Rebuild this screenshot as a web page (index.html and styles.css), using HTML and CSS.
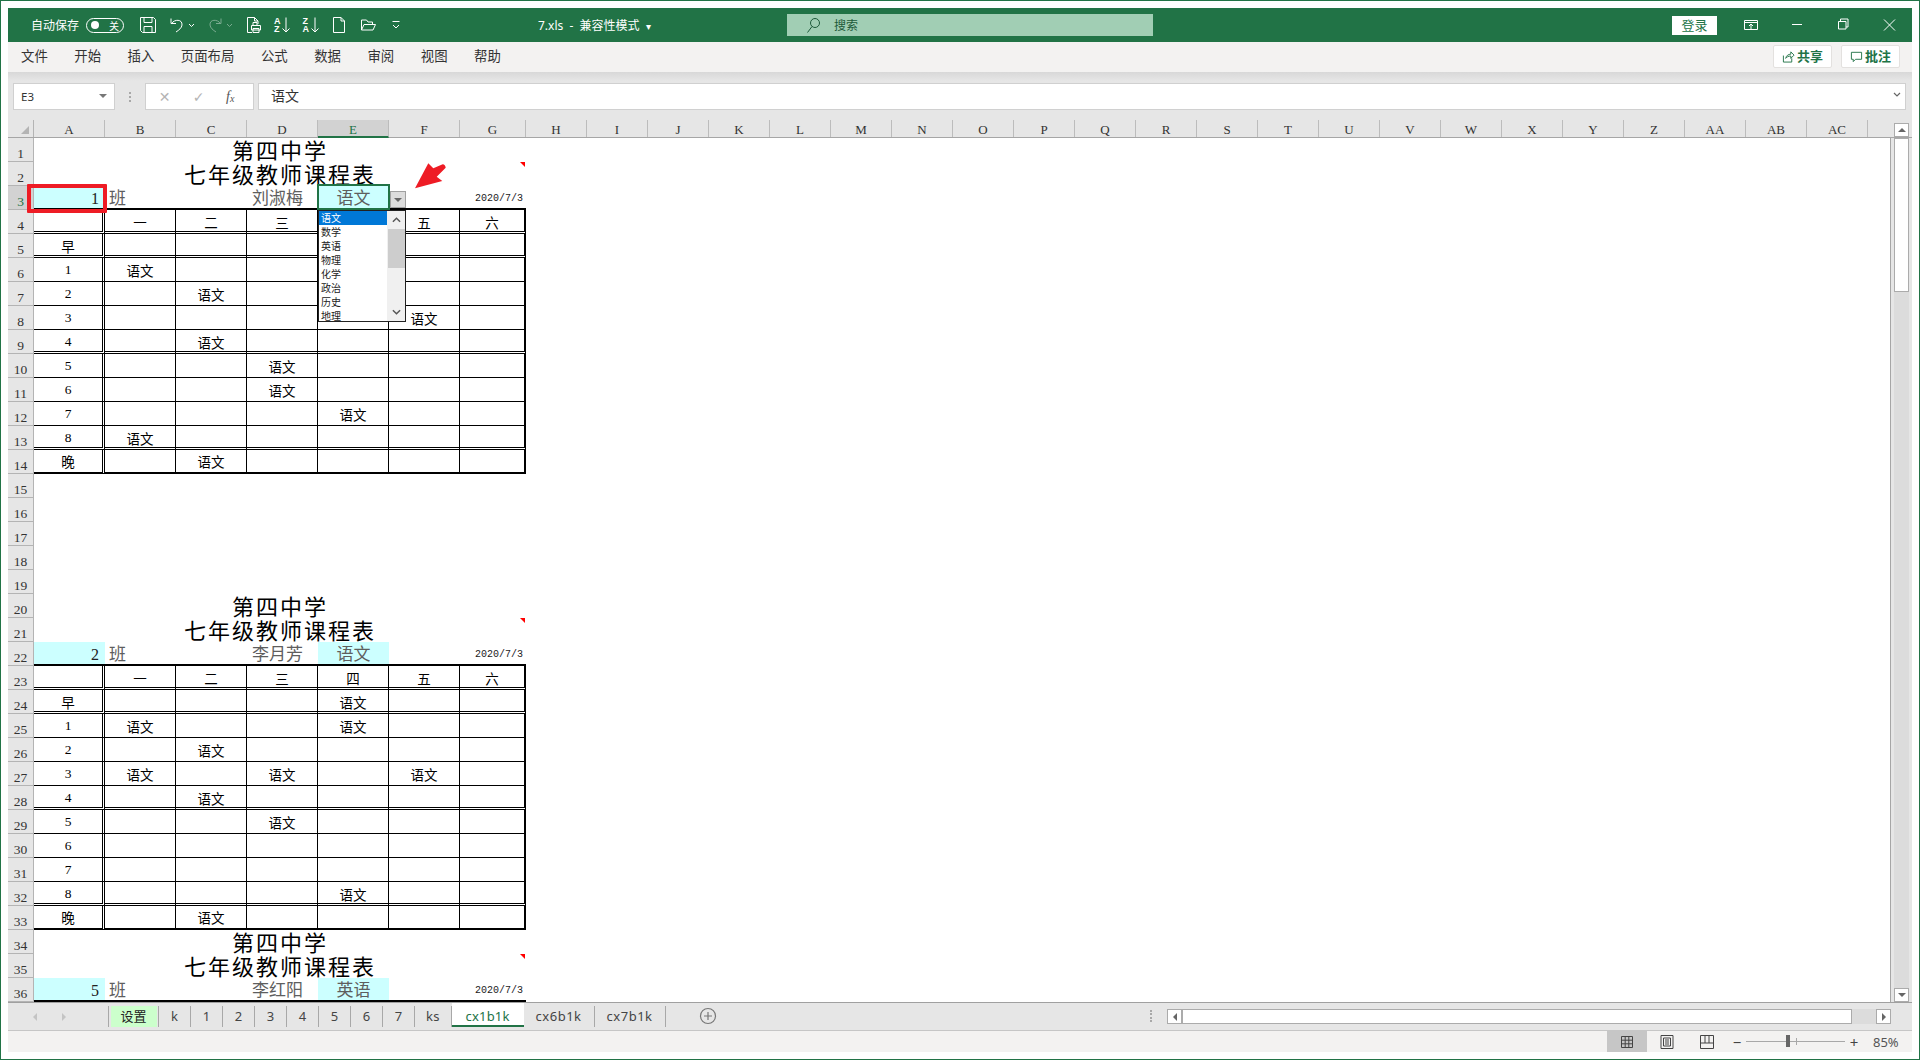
FILE: index.html
```html
<!DOCTYPE html>
<html lang="zh-CN">
<head>
<meta charset="utf-8">
<title>7.xls - 兼容性模式</title>
<link rel="stylesheet" href="styles.css">
</head>
<body>
<div class="page">
  <header class="titlebar">
    <span class="autosave">自动保存</span>
    <span class="toggle"><i class="toggle-dot"></i><b>关</b></span>
    <div class="qat">
      <svg class="ic" viewBox="0 0 16 16"><path d="M.5 .5h13l2 2v13h-13l-2-2z M4 .5v5h8v-5 M4 15.500v-6h8v6"/></svg>
      <svg class="ic wide" viewBox="0 0 26 16"><path d="M2 1.500v5h5 M2.500 6.500c3-4.500 11-4.500 10.500 1.500c-.3 3-3 5-6 7 M20 7l2.500 2.500 2.500-2.500"/></svg>
      <svg class="ic wide dim" viewBox="0 0 26 16"><path d="M14 1.500v5h-5 M13.500 6.500c-3-4.500-11-4.500-10.500 1.500c.3 3 3 5 6 7 M20 7l2.500 2.500 2.500-2.500"/></svg>
      <svg class="ic" viewBox="0 0 16 16"><path d="M6 15.500h-4.500v-15h7l3.500 3.500v3 M8.500 .5v3.500h3.500 M7 8.500v-3h4v3 M5.500 8.500h9v4.500h-9z M7 11.500v4h6v-4h-6"/></svg>
      <div class="sort"><span class="sort-l"><b>A</b><b>Z</b></span><svg class="sort-arrow" viewBox="0 0 8 16"><path d="M4 .5v14.500 M.5 11.500l3.500 3.500 3.500-3.500"/></svg></div>
      <div class="sort"><span class="sort-l"><b>Z</b><b>A</b></span><svg class="sort-arrow" viewBox="0 0 8 16"><path d="M4 .5v14.500 M.5 11.500l3.500 3.500 3.500-3.500"/></svg></div>
      <svg class="ic" viewBox="0 0 16 16"><path d="M2.500 .5h7.500l3.500 3.500v11.500h-11z M10 .5v3.500h3.500"/></svg>
      <svg class="ic" viewBox="0 0 16 16"><path d="M1.500 13v-10h5l1.500 2h4.500v2.500 M1.500 13l2.500-5.500h11.500l-2.500 5.500z"/></svg>
      <svg class="ic" viewBox="0 0 16 16"><path d="M4.500 4.500h7 M5 8l3 3 3-3"/></svg>
    </div>
    <span class="doc-title">7.xls&nbsp; - &nbsp;兼容性模式 <small>▾</small></span>
    <div class="search">
      <svg class="search-ic" viewBox="0 0 18 16"><circle cx="11" cy="6" r="4.500"/><path d="M8 9.500l-4.500 6"/></svg>
      <span>搜索</span>
    </div>
    <button class="login">登录</button>
    <div class="winctl">
      <svg class="ic-win" viewBox="0 0 14 14"><path d="M.5 2.500h13v9h-13z M.5 4.500h13 M7 11v-5 M5 8l2-2 2 2"/></svg>
      <svg class="ic-win" viewBox="0 0 14 14"><path d="M2 6.500h10"/></svg>
      <svg class="ic-win" viewBox="0 0 14 14"><path d="M2.500 3.500h7.500v7.500h-7.500z M4.500 3.500v-2.500h7.500v8h-2"/></svg>
      <svg class="ic-win" viewBox="0 0 14 14"><path d="M2 1.500l11 11 M13 1.500l-11 11"/></svg>
    </div>
  </header>

  <nav class="menubar">
    <span>文件</span><span>开始</span><span>插入</span><span>页面布局</span><span>公式</span><span>数据</span><span>审阅</span><span>视图</span><span>帮助</span>
    <div class="menu-actions">
      <button class="action"><svg class="ic-act" viewBox="0 0 14 14"><path d="M1.500 6v7h9v-4 M4 9c.5-3 3-4.500 5.500-4.500v-2.500l3.500 3.500-3.500 3.500v-2.500c-2.500 0-4.500 1-5.500 2.500z"/></svg>共享</button>
      <button class="action"><svg class="ic-act" viewBox="0 0 14 14"><path d="M1.500 2.500h11v7.500h-6.500l-2.500 2.500v-2.500h-2z"/></svg>批注</button>
    </div>
  </nav>

  <div class="formula">
    <div class="namebox"><span>E3</span><i class="caret"></i></div>
    <span class="dots"></span>
    <div class="fx-box">
      <span class="fx-x">✕</span><span class="fx-ok">✓</span><em class="fx-f">f<sub>x</sub></em>
    </div>
    <div class="fx-input"><span>语文</span><svg class="fx-drop" viewBox="0 0 8 6"><path d="M1 1l3 3 3-3"/></svg></div>
  </div>

  <div class="colhead">
    <div class="corner"><i></i></div>
    <div class="col-a">A</div><div class="col-a">B</div><div class="col-a">C</div><div class="col-a">D</div><div class="col-a sel">E</div><div class="col-a">F</div><div class="col-a col-g">G</div>
    <div class="col">H</div><div class="col">I</div><div class="col">J</div><div class="col">K</div><div class="col">L</div><div class="col">M</div><div class="col">N</div><div class="col">O</div><div class="col">P</div><div class="col">Q</div><div class="col">R</div><div class="col">S</div><div class="col">T</div><div class="col">U</div><div class="col">V</div><div class="col">W</div><div class="col">X</div><div class="col">Y</div><div class="col">Z</div><div class="col">AA</div><div class="col">AB</div><div class="col">AC</div>
    <div class="sb-btn sb-up"><i class="tri-up"></i></div>
  </div>

  <div class="sheet">
    <div class="rowhead">
      <div>1</div><div>2</div><div class="sel">3</div><div>4</div><div>5</div><div>6</div><div>7</div><div>8</div><div>9</div><div>10</div><div>11</div><div>12</div><div>13</div><div>14</div><div>15</div><div>16</div><div>17</div><div>18</div><div>19</div><div>20</div><div>21</div><div>22</div><div>23</div><div>24</div><div>25</div><div>26</div><div>27</div><div>28</div><div>29</div><div>30</div><div>31</div><div>32</div><div>33</div><div>34</div><div>35</div><div>36</div>
    </div>
    <div class="grid-area">
      <section class="blk">
        <div class="title">第四中学</div>
        <div class="title mark">七年级教师课程表</div>
        <div class="info cyan num">1</div><div class="info left">班</div><div class="info"></div><div class="info name">刘淑梅</div><div class="info cyan">语文</div><div class="info"></div><div class="info date">2020/7/3</div>

        <div class="c ca dbl"></div><div class="c dbl">一</div><div class="c dbl">二</div><div class="c dbl">三</div><div class="c dbl">四</div><div class="c dbl">五</div><div class="c cg dbl">六</div>
        <div class="c ca dbl">早</div><div class="c dbl"></div><div class="c dbl"></div><div class="c dbl"></div><div class="c dbl"></div><div class="c dbl"></div><div class="c cg dbl"></div>
        <div class="c ca">1</div><div class="c">语文</div><div class="c"></div><div class="c"></div><div class="c"></div><div class="c"></div><div class="c cg"></div>
        <div class="c ca">2</div><div class="c"></div><div class="c">语文</div><div class="c"></div><div class="c"></div><div class="c"></div><div class="c cg"></div>
        <div class="c ca">3</div><div class="c"></div><div class="c"></div><div class="c"></div><div class="c"></div><div class="c">语文</div><div class="c cg"></div>
        <div class="c ca dbl">4</div><div class="c dbl"></div><div class="c dbl">语文</div><div class="c dbl"></div><div class="c dbl"></div><div class="c dbl"></div><div class="c cg dbl"></div>
        <div class="c ca">5</div><div class="c"></div><div class="c"></div><div class="c">语文</div><div class="c"></div><div class="c"></div><div class="c cg"></div>
        <div class="c ca">6</div><div class="c"></div><div class="c"></div><div class="c">语文</div><div class="c"></div><div class="c"></div><div class="c cg"></div>
        <div class="c ca">7</div><div class="c"></div><div class="c"></div><div class="c"></div><div class="c">语文</div><div class="c"></div><div class="c cg"></div>
        <div class="c ca dbl">8</div><div class="c dbl">语文</div><div class="c dbl"></div><div class="c dbl"></div><div class="c dbl"></div><div class="c dbl"></div><div class="c cg dbl"></div>
        <div class="c ca end">晚</div><div class="c end"></div><div class="c end">语文</div><div class="c end"></div><div class="c end"></div><div class="c end"></div><div class="c cg end"></div>

        <div class="redbox"></div>
        <div class="cellsel"></div>
        <div class="dd-btn"><i class="tri-down"></i></div>
        <div class="dd-list">
          <ul>
            <li class="on">语文</li><li>数学</li><li>英语</li><li>物理</li><li>化学</li><li>政治</li><li>历史</li><li>地理</li>
          </ul>
          <div class="dd-scroll">
            <svg class="dd-arrow" viewBox="0 0 10 6"><path d="M1 5l4-4 4 4"/></svg>
            <i class="dd-thumb"></i>
            <svg class="dd-arrow dd-arrow-down" viewBox="0 0 10 6"><path d="M1 1l4 4 4-4"/></svg>
          </div>
        </div>
        <svg class="red-arrow" viewBox="0 0 31 26"><path d="M0 25.300L13.300 .3l5 5 9.400-4q2.500.3 3 3.400l-9 9 5.600 4.300z"/></svg>
      </section>

      <div class="gap-rows"></div>

      <section class="blk">
        <div class="title">第四中学</div>
        <div class="title mark">七年级教师课程表</div>
        <div class="info cyan num">2</div><div class="info left">班</div><div class="info"></div><div class="info name">李月芳</div><div class="info cyan">语文</div><div class="info"></div><div class="info date">2020/7/3</div>

        <div class="c ca dbl"></div><div class="c dbl">一</div><div class="c dbl">二</div><div class="c dbl">三</div><div class="c dbl">四</div><div class="c dbl">五</div><div class="c cg dbl">六</div>
        <div class="c ca dbl">早</div><div class="c dbl"></div><div class="c dbl"></div><div class="c dbl"></div><div class="c dbl">语文</div><div class="c dbl"></div><div class="c cg dbl"></div>
        <div class="c ca">1</div><div class="c">语文</div><div class="c"></div><div class="c"></div><div class="c">语文</div><div class="c"></div><div class="c cg"></div>
        <div class="c ca">2</div><div class="c"></div><div class="c">语文</div><div class="c"></div><div class="c"></div><div class="c"></div><div class="c cg"></div>
        <div class="c ca">3</div><div class="c">语文</div><div class="c"></div><div class="c">语文</div><div class="c"></div><div class="c">语文</div><div class="c cg"></div>
        <div class="c ca dbl">4</div><div class="c dbl"></div><div class="c dbl">语文</div><div class="c dbl"></div><div class="c dbl"></div><div class="c dbl"></div><div class="c cg dbl"></div>
        <div class="c ca">5</div><div class="c"></div><div class="c"></div><div class="c">语文</div><div class="c"></div><div class="c"></div><div class="c cg"></div>
        <div class="c ca">6</div><div class="c"></div><div class="c"></div><div class="c"></div><div class="c"></div><div class="c"></div><div class="c cg"></div>
        <div class="c ca">7</div><div class="c"></div><div class="c"></div><div class="c"></div><div class="c"></div><div class="c"></div><div class="c cg"></div>
        <div class="c ca dbl">8</div><div class="c dbl"></div><div class="c dbl"></div><div class="c dbl"></div><div class="c dbl">语文</div><div class="c dbl"></div><div class="c cg dbl"></div>
        <div class="c ca end">晚</div><div class="c end"></div><div class="c end">语文</div><div class="c end"></div><div class="c end"></div><div class="c end"></div><div class="c cg end"></div>
      </section>

      <section class="blk">
        <div class="title">第四中学</div>
        <div class="title mark">七年级教师课程表</div>
        <div class="info cyan num">5</div><div class="info left">班</div><div class="info"></div><div class="info name">李红阳</div><div class="info cyan">英语</div><div class="info"></div><div class="info date">2020/7/3</div>
      </section>
    </div>
    <aside class="vscroll">
      <div class="vthumb"></div>
      <div class="vtrack"></div>
      <div class="sb-btn"><i class="tri-down"></i></div>
    </aside>
  </div>

  <div class="tabbar">
    <div class="tabnav"><i class="nav-l"></i><i class="nav-r"></i></div>
    <div class="tab setup">设置</div><div class="tab">k</div><div class="tab">1</div><div class="tab">2</div><div class="tab">3</div><div class="tab">4</div><div class="tab">5</div><div class="tab">6</div><div class="tab">7</div><div class="tab">ks</div>
    <div class="tab active">cx1b1k</div><div class="tab long">cx6b1k</div><div class="tab long">cx7b1k</div>
    <svg class="addsheet" viewBox="0 0 18 18"><circle cx="9" cy="9" r="7.500"/><path d="M9 5v8 M5 9h8"/></svg>
    <span class="hs-dots"></span>
    <div class="hscroll">
      <div class="hs-btn"><i class="tri-left"></i></div>
      <div class="hs-thumb"></div>
      <div class="hs-track"></div>
      <div class="hs-btn"><i class="tri-right"></i></div>
    </div>
  </div>

  <footer class="status">
    <div class="view on"><svg class="ic-view" viewBox="0 0 14 14"><path d="M1.500 1.500h11v11h-11z M1.500 5.200h11 M1.500 8.800h11 M5.200 1.500v11 M8.800 1.500v11"/></svg></div>
    <div class="view"><svg class="ic-view" viewBox="0 0 14 14"><path d="M1 .5h12v13h-12z M3.500 3h7v8h-7z M5 5h4 M5 7h4 M5 9h4"/></svg></div>
    <div class="view"><svg class="ic-view" viewBox="0 0 14 14"><path d="M.5 .5h13v13h-13z M.5 8h13 M5 .5v7.500 M9 .5v7.500"/></svg></div>
    <span class="zoom-sign">−</span>
    <div class="slider"><i class="slider-tick"></i><i class="slider-thumb"></i></div>
    <span class="zoom-sign">+</span>
    <span class="zoom-val">85%</span>
  </footer>
</div>
</body>
</html>
```

FILE: styles.css
```css
* { box-sizing: border-box; }
html, body { margin: 0; padding: 0; background: #fff; }
body { width: 1920px; height: 1060px; overflow: hidden; font-family: "Noto Sans", "Noto Sans CJK SC", sans-serif; font-size: 12px; color: #333; }
button { font: inherit; padding: 0; }
i { display: block; }

.page { width: 1920px; height: 1060px; border: 1px solid #217346; padding: 7px; display: flex; flex-direction: column; background: #fff; }

/* title bar */
.titlebar { height: 34px; flex: none; background: #217346; color: #fff; display: flex; align-items: center; padding-left: 23px; }
.autosave { font-size: 12px; width: 48px; white-space: nowrap; }
.toggle { width: 38px; height: 15px; margin-left: 7px; border: 1px solid #fff; border-radius: 8px; display: flex; align-items: center; justify-content: space-between; padding: 0 4px; }
.toggle-dot { width: 8px; height: 8px; border-radius: 50%; background: #fff; }
.toggle b { font-weight: 400; font-size: 10px; }
.qat { display: flex; gap: 12.5px; margin-left: 16px; align-items: center; }
.ic { width: 16px; height: 16px; fill: none; stroke: #fff; stroke-width: 1; display: block; }
.ic.wide { width: 26px; }
.ic.dim { opacity: .4; }
.sort { width: 16px; height: 16px; display: flex; justify-content: space-between; }
.sort-l { display: flex; flex-direction: column; width: 8px; font-family: "Liberation Sans", sans-serif; font-size: 9px; line-height: 8px; }
.sort-l b { font-weight: 700; display: block; }
.sort-arrow { width: 8px; height: 16px; fill: none; stroke: #fff; stroke-width: 1; }
.doc-title { margin-left: 134px; width: 118px; font-size: 12px; white-space: nowrap; }
.doc-title small { font-size: 10px; margin-left: 3px; }
.search { margin-left: 131px; width: 366px; height: 22px; background: #a1ceb4; display: flex; align-items: center; padding-left: 17px; gap: 12px; color: #1d5a3a; font-size: 12px; }
.search-ic { width: 18px; height: 16px; fill: none; stroke: #1d5a3a; stroke-width: 1; }
.login { margin-left: auto; width: 45px; height: 19px; background: #fff; color: #217346; border: 0; font-size: 13px; line-height: 19px; }
.winctl { display: flex; gap: 32px; margin-left: 27px; padding-right: 16px; }
.ic-win { width: 14px; height: 14px; fill: none; stroke: #fff; stroke-width: 1; display: block; }

/* menu bar */
.menubar { height: 30px; flex: none; background: #f3f2f1; display: flex; align-items: flex-start; gap: 26.5px; padding-left: 13px; font-size: 13.4px; line-height: 29px; color: #333; }
.menu-actions { margin-left: auto; display: flex; gap: 9px; margin-top: 3px; padding-right: 12px; }
.action { width: 59px; height: 23px; background: #fff; border: 1px solid #e3e1df; border-radius: 2px; color: #217346; font-size: 13px; font-weight: 700; display: flex; align-items: center; justify-content: center; gap: 2px; }
.ic-act { width: 13px; height: 13px; fill: none; stroke: #217346; stroke-width: 1; }

/* formula bar */
.formula { height: 48px; flex: none; background: linear-gradient(#d8d8d8, #e6e6e6 9px); display: flex; align-items: flex-start; padding: 11px 6px 0 5px; }
.namebox { width: 102px; height: 27px; background: #fff; border: 1px solid #d0d0d0; display: flex; align-items: center; justify-content: space-between; padding: 0 7px 1px 7px; font-size: 11.5px; }
.caret { width: 0; height: 0; border: 4px solid transparent; border-top: 4px solid #777; border-bottom: 0; }
.dots { width: 2px; height: 10px; margin: 9px 0 0 14px; border-left: 2px dotted #a8a8a8; }
.fx-box { width: 109px; height: 27px; margin-left: 14px; background: #fff; border: 1px solid #d0d0d0; position: relative; display: flex; align-items: center; padding-left: 12px; gap: 21px; color: #aaa; font-size: 14px; }
.fx-x, .fx-ok { width: 13px; text-align: center; font-family: "DejaVu Sans", sans-serif; color: #b4b4b4; }
.fx-f { font-family: "Liberation Serif", serif; font-size: 14px; color: #555; line-height: 1; }
.fx-f sub { font-size: 10px; vertical-align: -1px; line-height: 0; }
.fx-input { flex: 1; height: 27px; margin-left: 4px; background: #fff; border: 1px solid #d0d0d0; display: flex; align-items: center; justify-content: space-between; padding: 0 4px 4px 12px; font-size: 14px; color: #333; }
.fx-drop { width: 8px; height: 6px; fill: none; stroke: #666; stroke-width: 1.200; }

/* column headers */
.colhead { height: 18px; flex: none; background: #e6e6e6; display: flex; font-family: "Liberation Serif", "Noto Sans CJK SC", serif; font-size: 13px; color: #333; border-bottom: 1px solid #a6a6a6; line-height: 19px; }
.corner { width: 26px; border-right: 1px solid #b4b4b4; position: relative; flex: none; display: flex; align-items: flex-end; justify-content: flex-end; padding: 0 4px 3px 0; }
.corner i { width: 0; height: 0; border-style: solid; border-width: 0 0 8px 8px; border-color: transparent transparent #b4b4b4 transparent; }
.col, .col-a { width: 61px; flex: none; text-align: center; border-right: 1px solid #bcbcbc; }
.col-a { width: 71px; }
.col-g { width: 66px; }
.colhead .sel { background: #d2d2d2; color: #217346; border-bottom: 2px solid #217346; height: 18px; }
.sb-btn { width: 15px; height: 14px; flex: none; background: #fff; border: 1px solid #ababab; display: flex; align-items: center; justify-content: center; }
.sb-up { margin: 3px 3px 0 auto; }
.tri-up { width: 0; height: 0; border-left: 4px solid transparent; border-right: 4px solid transparent; border-bottom: 4px solid #666; }
.tri-down { width: 0; height: 0; border-left: 4px solid transparent; border-right: 4px solid transparent; border-top: 4px solid #666; }
.tri-left { width: 0; height: 0; border-top: 4px solid transparent; border-bottom: 4px solid transparent; border-right: 4px solid #666; }
.tri-right { width: 0; height: 0; border-top: 4px solid transparent; border-bottom: 4px solid transparent; border-left: 4px solid #666; }

/* sheet */
.sheet { height: 864px; flex: none; display: flex; }
.rowhead { width: 26px; flex: none; background: #e6e6e6; font-family: "Liberation Serif", serif; font-size: 13.5px; color: #333; }
.rowhead div { height: 24px; border-bottom: 1px solid #b4b4b4; border-right: 1px solid #b4b4b4; display: flex; align-items: flex-end; justify-content: center; line-height: 15px; }
.rowhead .sel { background: #d2d2d2; color: #217346; }
.grid-area { width: 1857px; flex: none; background: #fff; border-right: 1px solid #a6a6a6; font-family: "Liberation Serif", "Noto Sans CJK SC", sans-serif; font-size: 13.5px; color: #000; }
.blk { display: grid; grid-template-columns: repeat(6, 71px) 66px; grid-auto-rows: 24px; width: 492px; position: relative; }
.gap-rows { height: 120px; }
.title { grid-column: 1 / -1; text-align: center; font-size: 22px; letter-spacing: 2px; line-height: 24px; padding-top: 2px; color: #000; position: relative; }
.title.mark::after { content: ""; position: absolute; right: 1px; top: 0; border-style: solid; border-width: 0 5px 5px 0; border-color: transparent #f00 transparent transparent; }
.info { border-bottom: 2px solid #000; display: flex; align-items: flex-end; justify-content: center; font-size: 17px; line-height: 18px; color: #5e5e5e; }
.info.cyan { background: #ccffff; }
.info.num { justify-content: flex-end; padding-right: 6px; font-size: 16px; color: #222; }
.info.left { justify-content: flex-start; padding-left: 4px; }
.info.name { padding-right: 10px; }
.info.date { justify-content: flex-end; padding: 0 3px 2px 0; font-family: "Liberation Mono", monospace; font-size: 10px; line-height: 14px; color: #222; }
.c { border-right: 1px solid #000; border-bottom: 1px solid #000; display: flex; align-items: center; justify-content: center; }
.ca { border-right: 3px double #000; }
.cg { border-right: 2px solid #000; }
.dbl { border-bottom: 3px double #000; padding-top: 2px; }
.end { border-bottom: 2px solid #000; }

/* overlays on the first block */
.redbox { position: absolute; left: -7px; top: 46px; width: 80px; height: 29px; border: 4px solid #ee1c25; border-radius: 1px; }
.cellsel { position: absolute; left: 283px; top: 46px; width: 73px; height: 26px; border: 2px solid #217346; }
.dd-btn { position: absolute; left: 356px; top: 53px; width: 16px; height: 17px; background: #dcdcdc; border: 1px solid #a0a0a0; display: flex; align-items: center; justify-content: center; }
.dd-list { position: absolute; left: 284px; top: 72px; width: 88px; height: 112px; background: #fff; border: 1px solid #222; display: flex; font-size: 10px; color: #222; z-index: 2; }
.dd-list ul { list-style: none; margin: 0; padding: 0; flex: 1; }
.dd-list li { height: 14px; line-height: 14px; padding-left: 2px; font-family: "Noto Sans CJK SC", sans-serif; }
.dd-list li.on { background: #0078d7; color: #fff; }
.dd-scroll { width: 18px; background: #f0f0f0; position: relative; display: flex; flex-direction: column; align-items: center; }
.dd-arrow { width: 9px; height: 6px; margin-top: 6px; fill: none; stroke: #555; stroke-width: 1.600; flex: none; }
.dd-thumb { width: 17px; height: 39px; margin-top: 6px; background: #cdcdcd; flex: none; }
.dd-arrow-down { margin-top: auto; margin-bottom: 6px; }
.red-arrow { position: absolute; left: 381px; top: 25px; width: 31px; height: 26px; fill: #ee1c25; }

/* vertical scrollbar */
.vscroll { width: 21px; flex: none; background: #e6e6e6; padding-left: 3px; padding-right: 3px; display: flex; flex-direction: column; }
.vthumb { height: 154px; flex: none; background: #fff; border: 1px solid #ababab; }
.vtrack { flex: 1; background: #dcdcdc; }

/* sheet tabs */
.tabbar { height: 28px; flex: none; background: #e6e6e6; border-top: 1px solid #a0a0a0; display: flex; align-items: flex-start; padding-top: 3px; font-size: 13px; color: #444; font-family: "Noto Sans", "Noto Sans CJK SC", sans-serif; }
.tabnav { width: 101px; height: 21px; border-right: 1px solid #a8a8a8; display: flex; gap: 25px; align-items: center; padding-left: 25px; flex: none; }
.nav-l { width: 0; height: 0; border-top: 4px solid transparent; border-bottom: 4px solid transparent; border-right: 4px solid #c4c4c4; }
.nav-r { width: 0; height: 0; border-top: 4px solid transparent; border-bottom: 4px solid transparent; border-left: 4px solid #c4c4c4; }
.tab { min-width: 32px; height: 21px; padding: 0 11px; line-height: 20px; letter-spacing: .2px; text-align: center; border-right: 1px solid #a8a8a8; flex: none; }
.tab.long { padding: 0 12px; letter-spacing: .5px; width: 71px; }
.tab.setup { min-width: 50px; padding: 0; color: #222; letter-spacing: 0; background: linear-gradient(#ccffcc, #ccffcc) center / 46px 100% no-repeat; }
.tab.active { height: 24px; margin-top: -3px; padding-top: 3px; background: #fff; color: #217346; border-right: 0; border-bottom: 2px solid #217346; width: 72px; }
.addsheet { width: 18px; height: 18px; margin: 1px 0 0 33px; fill: none; stroke: #777; stroke-width: 1.200; flex: none; }
.hs-dots { width: 2px; height: 12px; margin: 4px 0 0 auto; border-left: 2px dotted #a8a8a8; flex: none; }
.hscroll { width: 724px; height: 15px; margin: 3px 21px 0 15px; display: flex; flex: none; }
.hs-btn { width: 15px; background: #fff; border: 1px solid #ababab; display: flex; align-items: center; justify-content: center; flex: none; }
.hs-thumb { width: 670px; background: #fff; border: 1px solid #ababab; flex: none; }
.hs-track { flex: 1; background: #dcdcdc; }

/* status bar */
.status { height: 22px; flex: none; background: #f3f2f1; border-top: 1px solid #c6c6c6; display: flex; align-items: center; justify-content: flex-end; padding-right: 13px; font-size: 13px; color: #555; }
.view { width: 40px; height: 21px; display: flex; align-items: center; justify-content: center; }
.view.on { background: #c6c6c6; }
.ic-view { width: 14px; height: 14px; fill: none; stroke: #444; stroke-width: 1; }
.zoom-sign { width: 10px; text-align: center; margin-left: 4px; margin-right: 4px; font-size: 15px; line-height: 20px; color: #444; }
.view + .zoom-sign { margin-left: 5px; }
.slider { width: 99px; height: 1px; background: #a8a8a8; position: relative; }
.slider-thumb { position: absolute; left: 40px; top: -6px; width: 4px; height: 12px; background: #666; }
.slider-tick { position: absolute; left: 50px; top: -3px; width: 1px; height: 7px; background: #a8a8a8; }
.zoom-val { width: 26px; margin-left: 10px; white-space: nowrap; }
```
